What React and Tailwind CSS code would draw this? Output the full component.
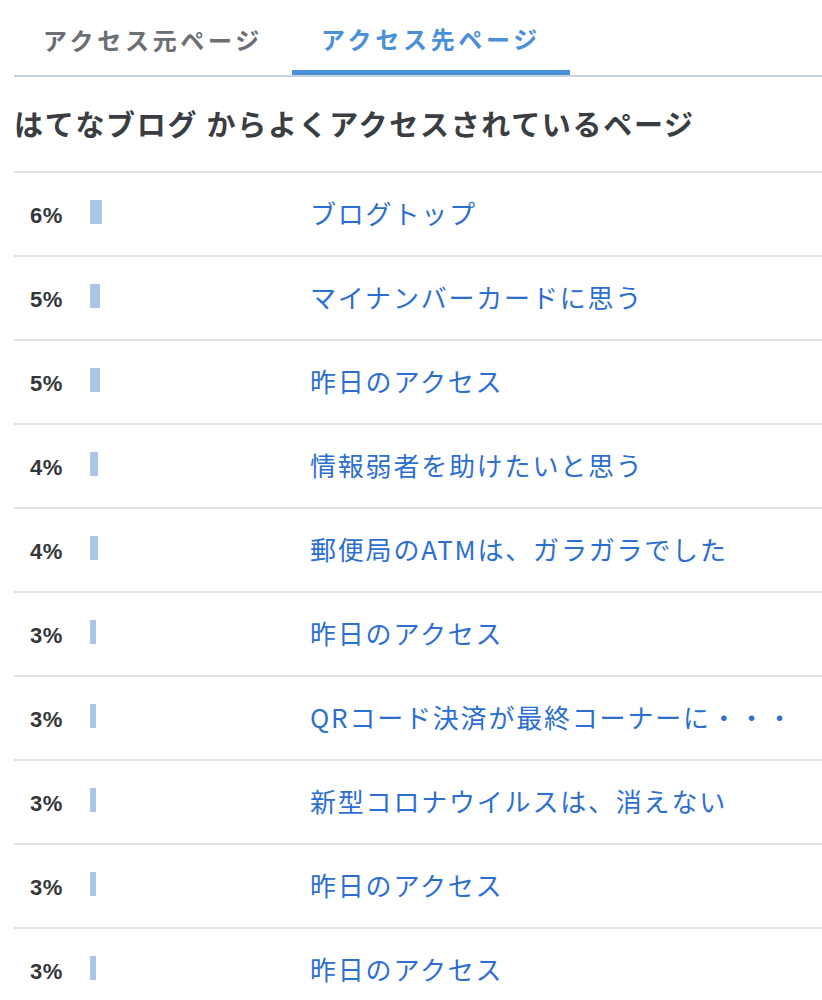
import React from 'react';

const pages = [
  { pct: 6, title: 'ブログトップ' },
  { pct: 5, title: 'マイナンバーカードに思う' },
  { pct: 5, title: '昨日のアクセス' },
  { pct: 4, title: '情報弱者を助けたいと思う' },
  { pct: 4, title: '郵便局のATMは、ガラガラでした' },
  { pct: 3, title: '昨日のアクセス' },
  { pct: 3, title: 'QRコード決済が最終コーナーに・・・' },
  { pct: 3, title: '新型コロナウイルスは、消えない' },
  { pct: 3, title: '昨日のアクセス' },
  { pct: 3, title: '昨日のアクセス' },
];

const jp = { fontFamily: '"Noto Sans CJK JP", "Noto Sans", sans-serif' };

function App() {
  return (
    <div className="w-full min-h-screen bg-white pl-[14px]" style={jp}>
      {/* Tabs */}
      <div className="flex border-b-2 border-[#c8d2da]">
        <button className="w-[278px] h-[75px] flex items-center justify-center pt-[4px] text-[24px] font-bold tracking-[3.7px] text-[#6b6f73]">
          アクセス元ページ
        </button>
        <button className="w-[278px] h-[75px] flex items-center justify-center pt-[7px] text-[24px] font-bold tracking-[3.7px] text-[#4a90d9] border-b-[5px] border-[#4a90d9] mb-[-2px]">
          アクセス先ページ
        </button>
      </div>

      {/* Heading */}
      <h2 className="h-[94px] flex items-center text-[29px] font-bold tracking-[1.7px] text-[#3a3d41]">
        はてなブログ からよくアクセスされているページ
      </h2>

      {/* Rows */}
      <div>
        {pages.map((p, i) => (
          <div key={i} className="h-[84px] flex items-center pb-[4px] border-t-2 border-[#e2e6ea]">
            <span
              className="w-[76px] pl-[16px] pt-[6px] text-[22px] font-bold tracking-[0.5px] text-[#35383b]"
              style={{ fontFamily: '"Liberation Sans", Arial, sans-serif' }}
            >
              {p.pct}%
            </span>
            <div className="w-[220px] flex">
              <div className="h-[24px] bg-[#abc6e5]" style={{ width: p.pct * 2 }} />
            </div>
            <a className="text-[26px] tracking-[1.8px] text-[#2d6fd1]">{p.title}</a>
          </div>
        ))}
      </div>
    </div>
  );
}

export default App;
